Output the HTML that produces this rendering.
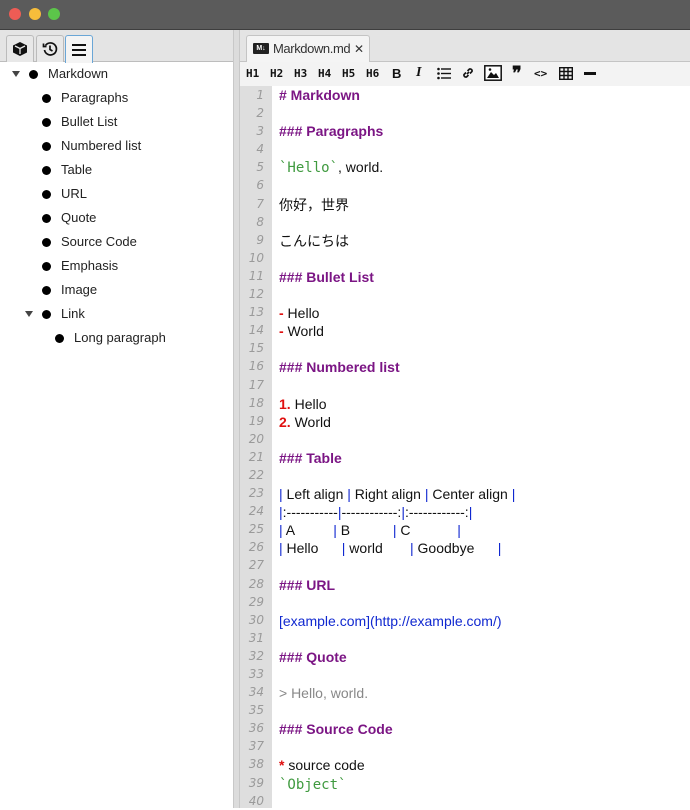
<!DOCTYPE html><html><head><style>
*{margin:0;padding:0;box-sizing:border-box}
body{width:690px;height:808px;overflow:hidden;background:#fff;font-family:"Liberation Sans","Noto Sans CJK JP",sans-serif;position:relative}
.a{position:absolute}
.title{left:0;top:0;width:690px;height:30px;background:#5b5b5b;border-bottom:1px solid #3e3e3e}
.dot{top:8px;width:12px;height:12px;border-radius:50%}
.side{left:0;top:30px;width:233px;height:778px;background:#fff}
.tabs{left:0;top:30px;width:233px;height:32px;background:#e4e4e4;border-bottom:1px solid #bdbdbd}
.tb{top:35px;width:28px;height:27px;border:1px solid #bbb;border-bottom:none;background:#e8e8e8;border-radius:3px 3px 0 0;display:flex;align-items:center;justify-content:center}
.div{left:233px;top:30px;width:7px;height:778px;background:#dcdcdc;border-left:1px solid #c8c8c8;border-right:1px solid #c8c8c8}
.row{font-size:13px;color:#222;height:24px;line-height:24px}
.b{display:inline-block;width:9px;height:9px;border-radius:50%;background:#000;position:absolute;top:8px}
.tri{position:absolute;top:9px;width:0;height:0;border-left:4px solid transparent;border-right:4px solid transparent;border-top:6px solid #444}
.rtabs{left:240px;top:30px;width:450px;height:32px;background:#e4e4e4;border-bottom:1px solid #c4c4c4}
.tab{left:246px;top:35px;width:124px;height:28px;background:#f4f4f4;border:1px solid #c4c4c4;border-bottom:none;border-radius:3px 3px 0 0;font-size:13px;line-height:26px;color:#333;white-space:nowrap}
.tool{left:240px;top:62px;width:450px;height:24px;background:#f3f3f3;font-family:"DejaVu Sans Mono",monospace;font-size:11px;font-weight:bold;color:#111}
.tool span{position:absolute;top:5px}
.gut{left:240px;top:86px;width:32px;height:722px;background:#dedede}
.ln{left:240px;top:86px;width:24px;text-align:right;font-size:12px;font-style:italic;color:#9a9a9a;line-height:18.1px;font-family:"DejaVu Sans","Liberation Sans",sans-serif}
.code{left:279px;top:86px;font-size:14px;line-height:18.1px;color:#111;white-space:pre}
.h{color:#7b1584;font-weight:bold}
.g{color:#3f9a3f;font-family:"DejaVu Sans Mono",monospace;font-size:14px}
.r{color:#e01010;font-weight:bold}
.bl{color:#1028d0}
.q{color:#888}
</style></head><body>
<div class="a title"></div>
<div class="a dot" style="left:9px;background:#ee5c55"></div>
<div class="a dot" style="left:29px;background:#f6bd3b"></div>
<div class="a dot" style="left:48px;background:#5cc54a"></div>
<div class="a side"></div>
<div class="a tabs"></div>
<div class="a tb" style="left:6px"><svg width="16" height="16" viewBox="0 0 16 16"><path d="M8 1 L15 4.5 V11.5 L8 15 L1 11.5 V4.5 Z" fill="#111"/><path d="M3 5 L8 7.5 L13 5 M8 7.5 V13" stroke="#e8e8e8" stroke-width="1.3" fill="none"/></svg></div>
<div class="a tb" style="left:36px"><svg width="16" height="16" viewBox="0 0 16 16" fill="none" stroke="#111" stroke-width="1.7"><path d="M3.5 4.5 A6 6 0 1 1 2.5 9"/><path d="M1.5 2.5 V5.5 H4.5"/><path d="M8 4.5 V8.5 L10.5 10"/></svg></div>
<div class="a tb" style="left:65px;background:#f4f4f4;border-color:#6aa6d6;height:28px"><svg width="14" height="12" viewBox="0 0 14 12"><rect y="0" width="14" height="2" fill="#111"/><rect y="5" width="14" height="2" fill="#111"/><rect y="10" width="14" height="2" fill="#111"/></svg></div>
<div class="a" style="left:0;top:62px;width:233px">
<div class="row a" style="top:0;left:0;width:233px"><i class="tri" style="left:12px"></i><i class="b" style="left:29px"></i><span style="position:absolute;left:48px">Markdown</span></div>
<div class="row a" style="top:24px;left:0;width:233px"><i class="b" style="left:42px"></i><span style="position:absolute;left:61px">Paragraphs</span></div>
<div class="row a" style="top:48px;left:0;width:233px"><i class="b" style="left:42px"></i><span style="position:absolute;left:61px">Bullet List</span></div>
<div class="row a" style="top:72px;left:0;width:233px"><i class="b" style="left:42px"></i><span style="position:absolute;left:61px">Numbered list</span></div>
<div class="row a" style="top:96px;left:0;width:233px"><i class="b" style="left:42px"></i><span style="position:absolute;left:61px">Table</span></div>
<div class="row a" style="top:120px;left:0;width:233px"><i class="b" style="left:42px"></i><span style="position:absolute;left:61px">URL</span></div>
<div class="row a" style="top:144px;left:0;width:233px"><i class="b" style="left:42px"></i><span style="position:absolute;left:61px">Quote</span></div>
<div class="row a" style="top:168px;left:0;width:233px"><i class="b" style="left:42px"></i><span style="position:absolute;left:61px">Source Code</span></div>
<div class="row a" style="top:192px;left:0;width:233px"><i class="b" style="left:42px"></i><span style="position:absolute;left:61px">Emphasis</span></div>
<div class="row a" style="top:216px;left:0;width:233px"><i class="b" style="left:42px"></i><span style="position:absolute;left:61px">Image</span></div>
<div class="row a" style="top:240px;left:0;width:233px"><i class="tri" style="left:25px"></i><i class="b" style="left:42px"></i><span style="position:absolute;left:61px">Link</span></div>
<div class="row a" style="top:264px;left:0;width:233px"><i class="b" style="left:55px"></i><span style="position:absolute;left:74px">Long paragraph</span></div>
</div>
<div class="a div"></div>
<div class="a rtabs"></div>
<div class="a tab"><span style="position:absolute;left:6px;top:7px;width:16px;height:11px;background:#222;border-radius:1px;color:#fff;font-size:7px;line-height:11px;font-weight:bold;text-align:center">M↓</span><span style="position:absolute;left:26px;letter-spacing:-0.4px">Markdown.md</span><span style="position:absolute;left:107px;font-size:12px">✕</span></div>
<div class="a tool">
<span style="left:6px">H1</span><span style="left:30px">H2</span><span style="left:54px">H3</span><span style="left:78px">H4</span><span style="left:102px">H5</span><span style="left:126px">H6</span>
<span style="left:152px;font-family:'Liberation Sans';font-size:13px;top:4px">B</span>
<span style="left:176px;font-family:'Liberation Serif';font-style:italic;font-size:14px;top:3px">I</span>
<svg class="a" style="left:197px;top:5px" width="14" height="13" viewBox="0 0 14 13"><g fill="#111"><circle cx="1.5" cy="2" r="1.3"/><circle cx="1.5" cy="6.5" r="1.3"/><circle cx="1.5" cy="11" r="1.3"/><rect x="4" y="1.3" width="10" height="1.4"/><rect x="4" y="5.8" width="10" height="1.4"/><rect x="4" y="10.3" width="10" height="1.4"/></g></svg>
<svg class="a" style="left:221px;top:4px" width="14" height="14" viewBox="0 0 14 14" fill="none" stroke="#111" stroke-width="1.6"><path d="M6 8 L8 6"/><path d="M5 6.5 L3 8.5 A2 2 0 0 0 5.5 11 L7.5 9"/><path d="M9 7.5 L11 5.5 A2 2 0 0 0 8.5 3 L6.5 5"/></svg>
<svg class="a" style="left:244px;top:3px" width="18" height="16" viewBox="0 0 18 16"><rect x="0.8" y="0.8" width="16.4" height="14.4" fill="#fff" stroke="#111" stroke-width="1.5"/><path d="M3 13 L7 7 L10 10 L12 8 L15 13 Z" fill="#111"/><circle cx="6" cy="4.5" r="1.3" fill="#111"/></svg>
<span style="left:272px;font-family:'Liberation Serif';font-size:18px;top:1px">❞</span>
<span style="left:294px;top:5px">&lt;&gt;</span>
<svg class="a" style="left:319px;top:5px" width="14" height="13" viewBox="0 0 14 13" fill="none" stroke="#111" stroke-width="1.4"><rect x="0.7" y="0.7" width="12.6" height="11.6"/><path d="M0.7 4.5H13.3M0.7 8.5H13.3M5 0.7V12.3M9 0.7V12.3"/></svg>
<div class="a" style="left:344px;top:10px;width:12px;height:3px;background:#111"></div>
</div>
<div class="a gut"></div>
<div class="a ln">1<br>2<br>3<br>4<br>5<br>6<br>7<br>8<br>9<br>10<br>11<br>12<br>13<br>14<br>15<br>16<br>17<br>18<br>19<br>20<br>21<br>22<br>23<br>24<br>25<br>26<br>27<br>28<br>29<br>30<br>31<br>32<br>33<br>34<br>35<br>36<br>37<br>38<br>39<br>40</div>
<div class="a code"><span class="h"># Markdown</span>

<span class="h">### Paragraphs</span>

<span class="g">`Hello`</span>, world.

你好，世界

こんにちは

<span class="h">### Bullet List</span>

<span class="r">-</span> Hello
<span class="r">-</span> World

<span class="h">### Numbered list</span>

<span class="r">1.</span> Hello
<span class="r">2.</span> World

<span class="h">### Table</span>

<span class="bl">|</span> Left align <span class="bl">|</span> Right align <span class="bl">|</span> Center align <span class="bl">|</span>
<span class="bl">|</span>:-----------<span class="bl">|</span>------------:<span class="bl">|</span>:------------:<span class="bl">|</span>
<span class="bl">|</span> A          <span class="bl">|</span> B           <span class="bl">|</span> C            <span class="bl">|</span>
<span class="bl">|</span> Hello      <span class="bl">|</span> world       <span class="bl">|</span> Goodbye      <span class="bl">|</span>

<span class="h">### URL</span>

<span class="bl">[example.com](http://example.com/)</span>

<span class="h">### Quote</span>

<span class="q">&gt; Hello, world.</span>

<span class="h">### Source Code</span>

<span class="r">*</span> source code
<span class="g">`Object`</span>
</div>
</body></html>
